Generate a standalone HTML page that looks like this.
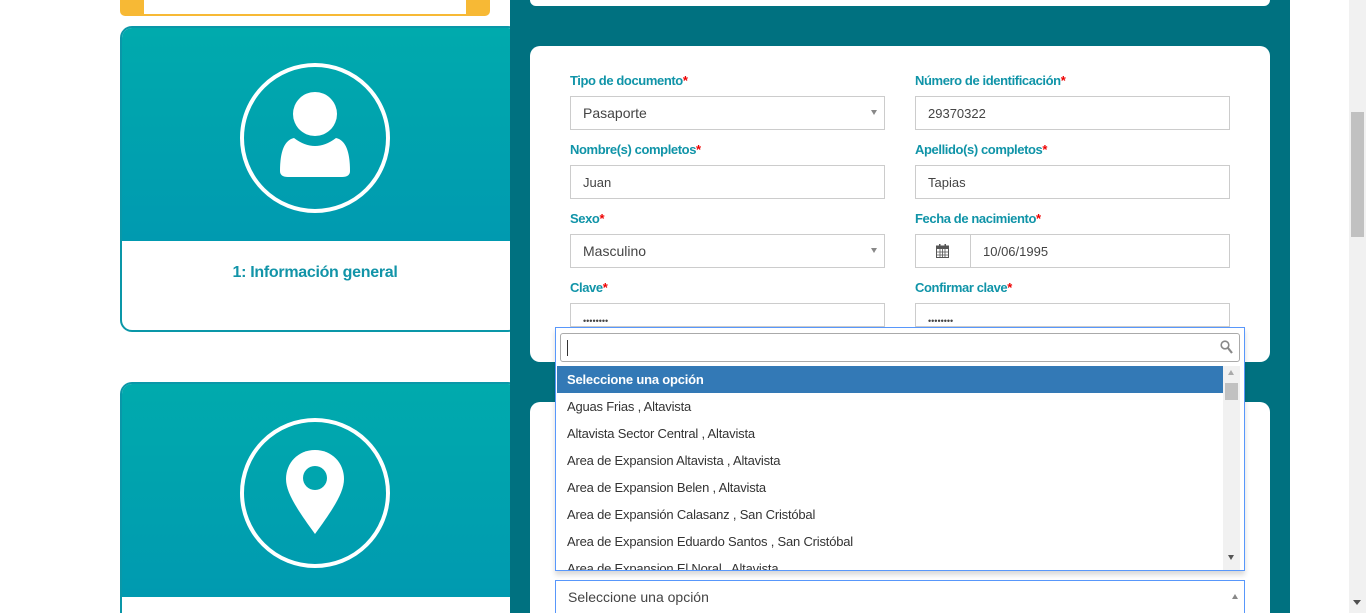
<!DOCTYPE html>
<html style="width:1366px;height:613px;overflow:hidden"><head><meta charset="utf-8"><style>
*{box-sizing:border-box;margin:0;padding:0}
body{width:1366px;height:613px;overflow:hidden;background:#fff;font-family:"Liberation Sans",sans-serif;position:relative}
.abs{position:absolute}
.teal{left:510px;top:0;width:780px;height:613px;background:#007180}
.card{background:#fff;border-radius:10px;position:absolute}
.lbl{position:absolute;font-size:13px;font-weight:bold;color:#1094a8;letter-spacing:-0.4px}
.lbl i{color:#e00;font-style:normal}
.inp{position:absolute;height:34px;border:1px solid #ccc;background:#fff;font-size:13px;color:#444;padding:9px 12px;width:315px}
.sel{font-size:14px;padding:8px 12px}
.arr{position:absolute;right:7px;top:13px;width:0;height:0;border-left:3px solid transparent;border-right:3px solid transparent;border-top:5px solid #888}
.side{position:absolute;left:120px;width:400px;border-radius:12px;overflow:hidden;border:2px solid #0a97a8;background:#fff}
.grad{height:213px;background:linear-gradient(#00aaad,#009ab0);position:relative}
.row{height:27px;line-height:27px;font-size:13px;color:#333;padding-left:10px;letter-spacing:-0.2px}
</style></head><body>
<div class="abs" style="left:120px;top:0;width:370px;height:16px;background:#f7b935;border-radius:0 0 5px 5px"></div>
<div class="abs" style="left:144px;top:0;width:322px;height:14px;background:#fff"></div>

<div class="side" style="top:26px;height:306px">
 <div class="grad"><svg class="abs" style="left:116px;top:33px" width="154" height="154" viewBox="0 0 154 154"><circle cx="77" cy="77" r="73" fill="none" stroke="#fff" stroke-width="4"/><circle cx="77" cy="53" r="22" fill="#fff"/><path d="M56 77 Q77 93 98 77 Q112 80 112 110 Q112 116 104 116 L50 116 Q42 116 42 110 Q42 80 56 77Z" fill="#fff"/></svg></div>
 <div style="position:absolute;left:0;width:386px;text-align:center;font-weight:bold;color:#1294a8;font-size:16px;top:236px;letter-spacing:-0.3px">1: Información general</div>
</div>
<div class="side" style="top:382px;height:231px;border-bottom:0;border-radius:12px 12px 0 0">
 <div class="grad"><svg class="abs" style="left:116px;top:32px" width="154" height="154" viewBox="0 0 154 154"><circle cx="77" cy="77" r="73" fill="none" stroke="#fff" stroke-width="4"/><path d="M77 34 C60 34 48 47 48 63 C48 76 58 92 77 118 C96 92 106 76 106 63 C106 47 94 34 77 34Z" fill="#fff"/><circle cx="77" cy="62" r="12" fill="#00a5ae"/></svg></div>
</div>

<div class="abs teal"></div>
<div class="card" style="left:530px;top:0;width:740px;height:6px;border-radius:0 0 10px 10px"></div>
<div class="card" style="left:530px;top:46px;width:740px;height:316px"></div>
<div class="card" style="left:530px;top:402px;width:740px;height:211px;border-radius:10px 10px 0 0"></div>

<div class="lbl" style="left:570px;top:73px">Tipo de documento<i>*</i></div>
<div class="lbl" style="left:915px;top:73px">Número de identificación<i>*</i></div>
<div class="inp sel" style="left:570px;top:96px">Pasaporte<span class="arr"></span></div>
<div class="inp" style="left:915px;top:96px">29370322</div>
<div class="lbl" style="left:570px;top:142px">Nombre(s) completos<i>*</i></div>
<div class="lbl" style="left:915px;top:142px">Apellido(s) completos<i>*</i></div>
<div class="inp" style="left:570px;top:165px">Juan</div>
<div class="inp" style="left:915px;top:165px">Tapias</div>
<div class="lbl" style="left:570px;top:211px">Sexo<i>*</i></div>
<div class="lbl" style="left:915px;top:211px">Fecha de nacimiento<i>*</i></div>
<div class="inp sel" style="left:570px;top:234px">Masculino<span class="arr"></span></div>
<div class="inp" style="left:915px;top:234px;padding:0">
 <div class="abs" style="left:0;top:0;width:55px;height:32px;border-right:1px solid #ccc"><svg class="abs" style="left:20px;top:9px" width="13" height="14" viewBox="0 0 13 14"><rect x="0.5" y="2" width="12" height="11.5" fill="none" stroke="#555"/><rect x="0" y="2" width="13" height="3" fill="#555"/><rect x="3" y="0" width="1.5" height="3" fill="#555"/><rect x="8.5" y="0" width="1.5" height="3" fill="#555"/><path d="M0 8h13M0 11h13M4 5v9M6.5 5v9M9 5v9" stroke="#555" stroke-width="0.8"/></svg></div>
 <div class="abs" style="left:67px;top:9px">10/06/1995</div></div>
<div class="lbl" style="left:570px;top:280px">Clave<i>*</i></div>
<div class="lbl" style="left:915px;top:280px">Confirmar clave<i>*</i></div>
<div class="inp" style="left:570px;top:303px;font-size:9px;padding-top:12px;height:24px">••••••••</div>
<div class="inp" style="left:915px;top:303px;font-size:9px;padding-top:12px;height:24px">••••••••</div>

<div class="abs" style="left:555px;top:327px;width:690px;height:244px;background:#fff;border:1px solid #5897fb;box-shadow:0 4px 5px rgba(0,0,0,.15)">
 <div class="abs" style="left:4px;top:5px;width:680px;height:29px;border:1px solid #aaa;border-radius:3px;background:#fff">
  <div class="abs" style="left:6px;top:6px;width:1px;height:16px;background:#333"></div>
  <svg class="abs" style="right:6px;top:6px" width="13" height="14" viewBox="0 0 13 14"><circle cx="5" cy="5" r="3.8" fill="none" stroke="#888" stroke-width="1.6"/><path d="M8 8l4 5" stroke="#888" stroke-width="2.2"/></svg></div>
 <div class="abs" style="left:1px;top:38px;width:686px;height:204px;overflow:hidden">
  <div class="row" style="background:#3379b6;color:#fff;font-weight:bold;width:666px">Seleccione una opción</div>
  <div class="row">Aguas Frias , Altavista</div>
  <div class="row">Altavista Sector Central , Altavista</div>
  <div class="row">Area de Expansion Altavista , Altavista</div>
  <div class="row">Area de Expansion Belen , Altavista</div>
  <div class="row">Area de Expansión Calasanz , San Cristóbal</div>
  <div class="row">Area de Expansion Eduardo Santos , San Cristóbal</div>
  <div class="row" style="height:15px;overflow:hidden">Area de Expansion El Noral , Altavista</div>
  <div class="abs" style="left:666px;top:0;width:17px;height:204px;background:#f1f1f1">
   <div class="abs" style="left:5px;top:4px;border-left:3.5px solid transparent;border-right:3.5px solid transparent;border-bottom:5px solid #aaa"></div>
   <div class="abs" style="left:2px;top:17px;width:13px;height:17px;background:#c1c1c1"></div>
   <div class="abs" style="left:5px;top:189px;border-left:3.5px solid transparent;border-right:3.5px solid transparent;border-top:5px solid #555"></div>
  </div>
 </div>
</div>
<div class="abs" style="left:555px;top:580px;width:690px;height:33px;background:#fff;border:1px solid #5897fb;border-bottom:0;font-size:14px;color:#444;padding:8px 12px">Seleccione una opción
 <div class="abs" style="right:6px;top:13px;border-left:3px solid transparent;border-right:3px solid transparent;border-bottom:5px solid #888"></div></div>

<div class="abs" style="left:1349px;top:0;width:17px;height:613px;background:#f1f1f1">
 <div class="abs" style="left:2px;top:112px;width:13px;height:125px;background:#c1c1c1"></div>
 <div class="abs" style="left:4px;top:600px;border-left:4px solid transparent;border-right:4px solid transparent;border-top:5px solid #505050"></div>
</div>
</body></html>
